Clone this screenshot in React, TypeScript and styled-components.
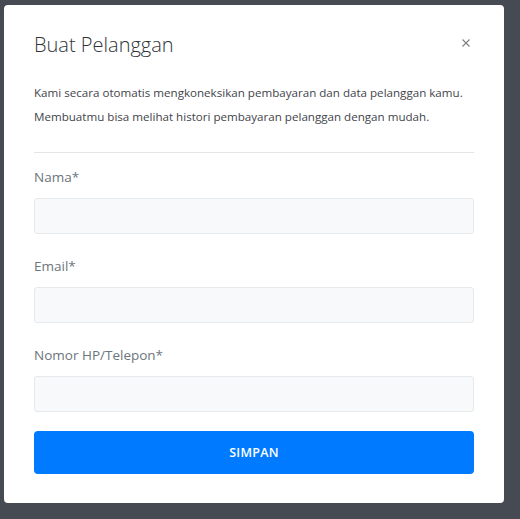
import React from "react";
import styled, { createGlobalStyle } from "styled-components";

const GlobalStyle = createGlobalStyle`
  html, body {
    margin: 0;
    padding: 0;
    background: #464b53;
  }
  * { box-sizing: border-box; }
`;

const Page = styled.div`
  min-height: 519px;
  padding: 5px 0 0 4px;
  background: #464b53;
  font-family: "Open Sans", "Noto Sans", sans-serif;
`;

const Modal = styled.div`
  width: 500px;
  background: #ffffff;
  border-radius: 4px;
  padding: 30px 30px 29px 30px;
`;

const Header = styled.div`
  display: flex;
  justify-content: space-between;
  align-items: flex-start;
`;

const Title = styled.h2`
  margin: 0;
  font-size: 20px;
  line-height: 20px;
  font-weight: 300;
  color: #2f3438;
`;

const CloseButton = styled.button`
  border: 0;
  background: transparent;
  padding: 0;
  margin: 4px 4px 0 0;
  width: 8px;
  height: 8px;
  display: flex;
  cursor: pointer;
`;

const Description = styled.p`
  margin: 26px 0 0 0;
  font-size: 11.6px;
  line-height: 24px;
  color: #3f454b;
`;

const Divider = styled.hr`
  border: 0;
  border-top: 1px solid #e3e6e9;
  margin: 23px 0 14px 0;
`;

const Form = styled.form`
  display: flex;
  flex-direction: column;
`;

const Field = styled.div`
  display: flex;
  flex-direction: column;
  & + & {
    margin-top: 22px;
  }
`;

const Label = styled.label`
  font-size: 13.5px;
  line-height: 20px;
  color: #6c757d;
  margin-bottom: 11px;
`;

const Input = styled.input`
  height: 36px;
  width: 100%;
  background: #f8f9fa;
  border: 1px solid #e6e9ec;
  border-radius: 3px;
  padding: 0 12px;
  font-family: inherit;
  font-size: 14px;
  outline: none;
`;

const SubmitButton = styled.button`
  margin-top: 19px;
  height: 43px;
  width: 100%;
  border: 0;
  border-radius: 4px;
  background: #007bff;
  color: #ffffff;
  font-family: inherit;
  font-weight: 600;
  font-size: 12.5px;
  letter-spacing: 0.3px;
  cursor: pointer;
`;

const fields = ["Nama*", "Email*", "Nomor HP/Telepon*"];

export default function App() {
  return (
    <>
      <GlobalStyle />
      <Page>
        <Modal>
          <Header>
            <Title>Buat Pelanggan</Title>
            <CloseButton aria-label="Tutup">
              <svg width="8" height="8" viewBox="0 0 8 8">
                <path d="M0.5 0.5 L7.5 7.5 M7.5 0.5 L0.5 7.5" stroke="#7b7f84" strokeWidth="1.1" />
              </svg>
            </CloseButton>
          </Header>
          <Description>
            Kami secara otomatis mengkoneksikan pembayaran dan data pelanggan kamu.
            <br />
            Membuatmu bisa melihat histori pembayaran pelanggan dengan mudah.
          </Description>
          <Divider />
          <Form onSubmit={(e) => e.preventDefault()}>
            {fields.map((f) => (
              <Field key={f}>
                <Label>{f}</Label>
                <Input type="text" />
              </Field>
            ))}
            <SubmitButton type="submit">SIMPAN</SubmitButton>
          </Form>
        </Modal>
      </Page>
    </>
  );
}
